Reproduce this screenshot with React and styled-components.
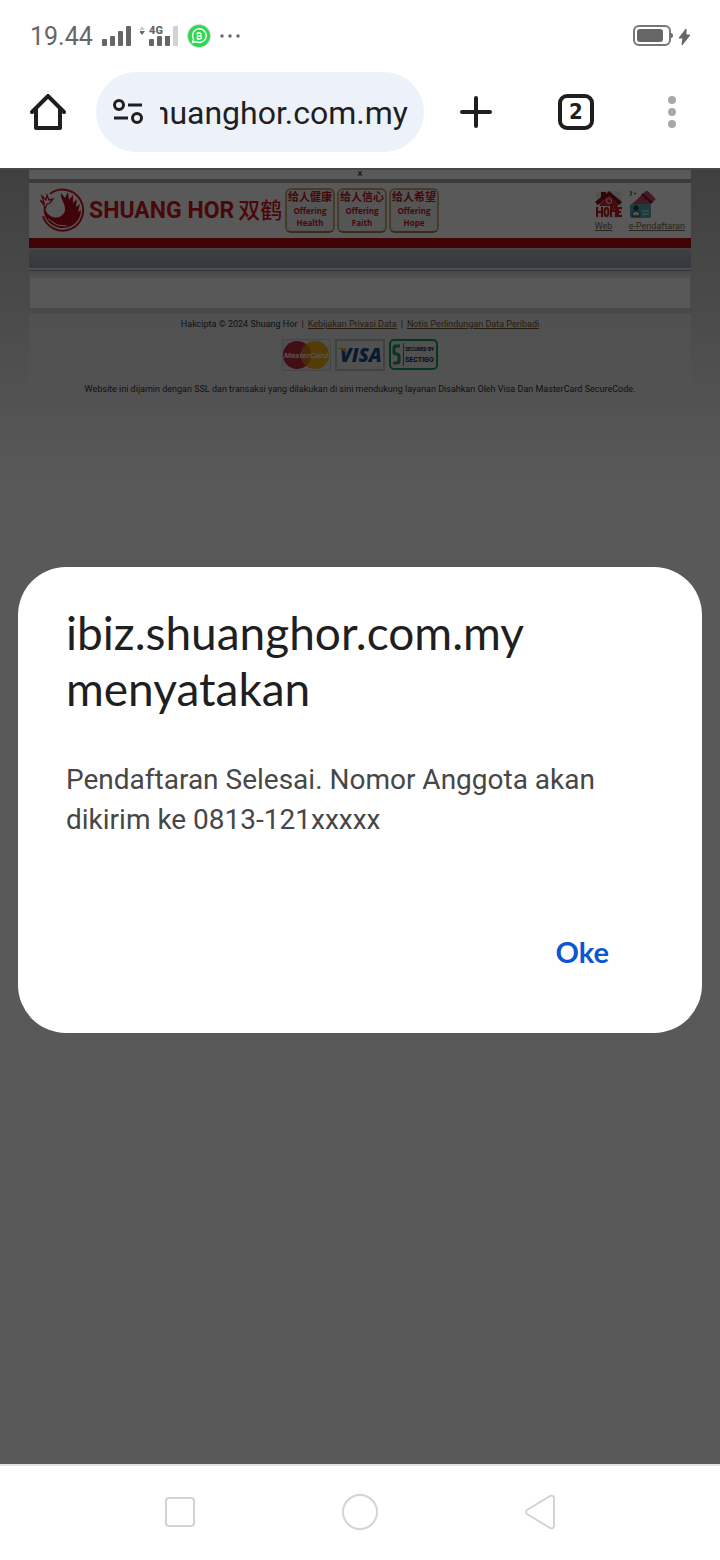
import React from 'react';
import styled, { createGlobalStyle } from 'styled-components';

const GlobalStyle = createGlobalStyle`
  *, *::before, *::after { box-sizing: border-box; }
  body { margin: 0; background: #fff; font-family: Roboto, "Noto Sans CJK SC", sans-serif; }
  button { border: 0; padding: 0; background: none; font: inherit; color: inherit; cursor: pointer; }
  svg { display: block; flex: none; }
`;

const Screen = styled.div`
  display: flex;
  flex-direction: column;
  min-height: 100vh;
`;

const StatusBar = styled.header`
  display: flex;
  align-items: center;
  gap: 9px;
  height: 72px;
  padding: 0 30px;
  color: #666;
`;

const Clock = styled.time`
  padding-top: 2px;
  font-size: 25px;
  line-height: 32px;
`;

const Battery = styled.div`
  margin-left: auto;
`;

const Toolbar = styled.nav`
  display: flex;
  padding-bottom: 16px;
  color: #1f1f1f;
`;

const ToolButton = styled.button`
  display: flex;
  flex: none;
  align-items: center;
  justify-content: center;
  width: ${(p) => (p.$wide ? 104 : 96)}px;
  height: 80px;
`;

const AddressBar = styled.div`
  display: flex;
  flex: 1;
  align-items: center;
  gap: 16px;
  min-width: 0;
  height: 80px;
  padding: 0 16px;
  border-radius: 40px;
  background: #ecf1fa;
`;

const AddressInput = styled.input`
  flex: 1;
  min-width: 0;
  height: 48px;
  padding: 2px 0 0;
  border: 0;
  outline: 0;
  background: none;
  color: #1f1f1f;
  direction: rtl;
  font-family: Roboto, sans-serif;
  font-size: 32px;
`;

const TabCount = styled.span`
  display: flex;
  align-items: center;
  justify-content: center;
  width: 36px;
  height: 36px;
  border: 4px solid #1f1f1f;
  border-radius: 9px;
  font-family: "DejaVu Sans Condensed", Roboto, sans-serif;
  font-size: 22px;
  font-weight: 700;
  line-height: 28px;
`;

const Viewport = styled.main`
  position: relative;
  display: flex;
  flex: 1;
  flex-direction: column;
`;

const Site = styled.div`
  flex: 1;
  padding: 0 29px;
  border-top: 2px solid #ccc;
  background: linear-gradient(#b6b6b6, #fff 320px);
`;

const TopStrip = styled.div`
  height: 13px;
  border-bottom: 4px solid #a8a8a8;
  background: #fff;
  text-align: center;
  font-size: 10px;
  line-height: 8px;
`;

const SiteHeader = styled.div`
  display: flex;
  align-items: flex-start;
  height: 55px;
  padding: 5px 6px 0 10px;
  background: #fff;
`;

const Brand = styled.div`
  display: flex;
  align-items: center;
  gap: 4px;
  width: 246px;
  height: 45px;
  color: #d3151d;
  white-space: nowrap;
`;

const BrandName = styled.span`
  font-family: Roboto, sans-serif;
  font-size: 23px;
  font-weight: 700;
  line-height: 32px;
`;

const BrandChinese = styled.span`
  padding-bottom: 6px;
  font-family: "Noto Sans CJK SC", sans-serif;
  font-size: 22px;
  font-weight: 500;
  line-height: 32px;
`;

const Badges = styled.div`
  display: flex;
  gap: 2px;
`;

const Badge = styled.div`
  width: 50px;
  height: 45px;
  border: 2px solid #c9a876;
  border-bottom-color: #a87f40;
  border-radius: 6px;
  background: #f4f4f4;
  color: #c3151d;
  text-align: center;
  font-family: "Open Sans", sans-serif;
  font-size: 8px;
  font-weight: 700;
  line-height: 12px;
  white-space: nowrap;
`;

const BadgeTitle = styled.div`
  height: 15px;
  font-family: "Noto Sans CJK SC", sans-serif;
  font-size: 11px;
  line-height: 12px;
`;

const Links = styled.div`
  display: flex;
  gap: 6px;
  margin-left: auto;
  padding-top: 2px;
`;

const SiteLink = styled.a`
  color: #77654e;
  font-size: 9px;
  line-height: 14px;
`;

const Bar = styled.div`
  height: 10px;
  background: #bb0d0f;
`;

const MenuBar = styled.div`
  height: 22px;
  border-top: 1px solid #c8c8c8;
  border-bottom: 2px solid #dde2e8;
  background: linear-gradient(#b3bbc0, #969fae);
`;

const Shade = styled.div`
  height: 8px;
  border-top: 1px solid #8b91a3;
  background: linear-gradient(#cfcfd6, #e4e4e4);
`;

const Panel = styled.div`
  height: 30px;
  border: solid #d8d8d8;
  border-width: 0 1px;
  background: #fdfdfd;
`;

const Divider = styled.div`
  height: 6px;
  background: linear-gradient(#cacaca, #d6d6d6);
`;

const Footer = styled.footer`
  display: flex;
  flex-direction: column;
  align-items: center;
  height: 80px;
  padding-top: 4px;
  background: linear-gradient(#e6e6e6, #ebebeb);
  color: #333;
  font-size: 9px;
  line-height: 12px;
  white-space: nowrap;
`;

const Logos = styled.div`
  display: flex;
  gap: 4px;
  margin: 9px 0 12px;
`;

const LegalLine = styled.div`
  display: flex;
  gap: 4px;
`;

const LegalLink = styled.a`
  color: #6d4f2c;
`;

const Scrim = styled.div`
  position: absolute;
  inset: 0;
  display: flex;
  align-items: center;
  padding: 0 18px 32px;
  background: rgba(0, 0, 0, 0.65);
`;

const Dialog = styled.section`
  display: flex;
  flex: 1;
  flex-direction: column;
  padding: 38px 48px 42px;
  border-radius: 48px;
  background: #fff;
`;

const DialogTitle = styled.h1`
  margin: 0 0 43px;
  color: #1f1f1f;
  font-family: Lato, sans-serif;
  font-size: 46px;
  font-weight: 400;
  line-height: 56px;
`;

const DialogText = styled.p`
  margin: 0 0 71px;
  color: #474747;
  font-size: 28px;
  line-height: 40px;
`;

const ConfirmButton = styled.button`
  align-self: flex-end;
  height: 80px;
  padding: 0 45px;
  color: #0b57d0;
  font-family: Lato, sans-serif;
  font-size: 29px;
  font-weight: 700;
`;

const SystemNav = styled.nav`
  display: flex;
  height: 96px;
  padding: 0 12.5% 2px;
  border-top: 2px solid #e2e2e2;
`;

const SystemButton = styled.button`
  display: flex;
  flex: 1;
  align-items: center;
  justify-content: center;
`;

const badges = [
  ['给人健康', 'Health'],
  ['给人信心', 'Faith'],
  ['给人希望', 'Hope'],
];

const SignalIcon = () => (
  <svg width="29" height="20" fill="#666">
    <rect x="0" y="13" width="5" height="7" rx="1" />
    <rect x="8" y="10" width="5" height="10" rx="1" />
    <rect x="16" y="5" width="5" height="15" rx="1" />
    <rect x="24" y="0" width="5" height="20" rx="1" />
  </svg>
);

const MobileDataIcon = () => (
  <svg width="38" height="22" fill="#666">
    <path d="M-1 5l3-4 3 4z" fill="#ccc" />
    <path d="M-1 6l3 4 3-4z" />
    <text x="9" y="9" fontFamily="Roboto, sans-serif" fontSize="11" fontWeight="900">4G</text>
    <rect x="9" y="14" width="5" height="7" rx="1" />
    <rect x="17" y="11" width="5" height="10" rx="1" />
    <path d="M25 11h5v9q0 1-1 1h-3q-1 0-1-1z" />
    <rect x="33" y="1" width="5" height="20" rx="1" fill="#d2d2d2" />
  </svg>
);

const WhatsAppIcon = () => (
  <svg width="24" height="24" viewBox="0 0 24 24">
    <circle cx="12" cy="12" r="12" fill="#dcdcdc" />
    <circle cx="12" cy="12" r="11" fill="#2bd951" />
    <path d="M5.5 18.5l1-3.5a6.8 6.8 0 1 1 2.7 2.6z" fill="none" stroke="#fff" strokeWidth="1.4" />
    <path d="M10.4 9h2.2a1.4 1.4 0 0 1 0 3h-2.2zm0 3h2.6a1.5 1.5 0 0 1 0 3h-2.6z" fill="none" stroke="#fff" strokeWidth="1.3" />
  </svg>
);

const MoreIcon = () => (
  <svg width="20" height="4" fill="#666">
    <circle cx="2" cy="2" r="1.7" /><circle cx="10" cy="2" r="1.7" /><circle cx="18" cy="2" r="1.7" />
  </svg>
);

const BatteryIcon = () => (
  <svg width="57" height="22" fill="#666">
    <rect x="1" y="1" width="36" height="19" rx="5" fill="none" stroke="#777" strokeWidth="2" />
    <rect x="4" y="4" width="26" height="13" rx="3" />
    <path d="M38 8q2 0 2 2.500t-2 2.500z" />
    <path d="M53 4l-7 9h4l-1 7 8-10h-4z" stroke="#666" strokeLinejoin="round" />
  </svg>
);

const HomeIcon = () => (
  <svg width="36" height="36" fill="none" stroke="#1f1f1f" strokeWidth="4" strokeLinecap="round" strokeLinejoin="round">
    <path d="M2 18L18 2l16 16" strokeLinejoin="miter" />
    <path d="M6 15v19h24V15" />
  </svg>
);

const TuneIcon = () => (
  <svg width="32" height="28" fill="none" stroke="#1f1f1f" strokeWidth="3">
    <circle cx="7" cy="7" r="4.500" /><path d="M16 7h14M2 20h14" /><circle cx="25" cy="20" r="4.500" />
  </svg>
);

const PhoenixLogo = () => (
  <svg width="46" height="45" viewBox="0 0 46 45">
    <path d="M11 6A20.500 20.500 0 1 1 4 28" fill="none" stroke="#d3151d" strokeWidth="2" />
    <path d="M5 17C3 30 12 40 24 40c10 0 18-8 18-18l-3 2 2-8-4 3 1-8-4 4v-8l-4 5-1-8-3 6-4-5c-1 6 4 9 4 16 0 6-6 10-12 8-5-1-8-6-9-12z" fill="#b60d15" />
    <path d="M1 12l4 3-2-7 4 4 1-5 2 5 4-1-3 4-3 1-2 5-1-4z" fill="none" stroke="#d3151d" strokeWidth="1.300" />
    <path d="M9 31l9 6 10 1" fill="none" stroke="#fff" strokeWidth="1" />
  </svg>
);

const HouseIcon = () => (
  <svg width="28" height="29" viewBox="0 0 28 29">
    <rect x="1" y="1" width="26" height="27" rx="3" fill="#ededed" />
    <path d="M0 12L6 7V2h5v2l3-3 13 11-3 3L14 6 3 15z" fill="#8d1116" />
    <path d="M5 14l9-8 9 8v2H5z" fill="#d8242c" />
    <circle cx="14" cy="11" r="2.500" fill="none" stroke="#eee" />
    <g fill="none" stroke="#c3151d" strokeWidth="2">
      <path d="M2 17v10M7 17v10M2 22h5M16 27V14l2.500 5 2.500-4v12M16 21h4M27 18h-4v8h4M23 22h3" />
      <ellipse cx="11.500" cy="22" rx="2" ry="4" />
    </g>
  </svg>
);

const CardsIcon = () => (
  <svg width="28" height="29" viewBox="0 0 28 29">
    <path d="M1 1l2 2M1 5l2-1M5 3l2 1" stroke="#597835" strokeWidth="1.500" />
    <path d="M3 14L17 1q1-1 3 1l6 6q1 1 0 2L15 20z" fill="#c64f60" />
    <path d="M12 5l10 9 2-2L14 3z" fill="#7c2638" />
    <rect x="1" y="14" width="21" height="14" rx="2" fill="#55a9b2" />
    <circle cx="7" cy="18" r="2.500" fill="#263a4d" />
    <path d="M3 26q0-5 4-5t4 5z" fill="#f0e6dd" stroke="#263a4d" />
    <path d="M13 21h7M13 24h7" stroke="#d8eff1" />
  </svg>
);

const MasterCardLogo = () => (
  <svg width="49" height="32">
    <rect x="0.500" y="0.500" width="48" height="31" rx="1" fill="#e6e6e6" stroke="#c9c9c9" />
    <circle cx="33" cy="16" r="14" fill="#edab12" />
    <circle cx="15" cy="16" r="14" fill="#bd283f" />
    <path d="M24 5a14 14 0 0 1 0 22 14 14 0 0 1 0-22" fill="#d77822" />
    <text x="2" y="19" fontFamily="Liberation Sans, sans-serif" fontSize="8" fontStyle="italic" fontWeight="700" fill="#eee">MasterCard</text>
  </svg>
);

const VisaLogo = () => (
  <svg width="50" height="32">
    <rect x="1" y="1" width="48" height="30" fill="#e8e8e8" stroke="#bcbcbc" strokeWidth="2" />
    <text x="5" y="23" fontFamily="Open Sans, sans-serif" fontSize="19" fontStyle="italic" fontWeight="800" fill="#164b91">VISA</text>
    <path d="M3 9h6q2 0 2 2l1 5q-3-5-9-7z" fill="#dba02b" />
  </svg>
);

const SectigoLogo = () => (
  <svg width="49" height="32">
    <rect x="1" y="1" width="47" height="29" rx="4" fill="#e8e8e8" stroke="#169957" strokeWidth="2" />
    <path d="M11 7H7q-2 0-2 2v4q0 2 2 2h1q2 0 2 2v5q0 2-2 2H4" fill="none" stroke="#169957" strokeWidth="3" />
    <path d="M14.500 4v23" stroke="#169957" />
    <g fontFamily="Roboto, sans-serif" fontWeight="700" fill="#222">
      <text x="16" y="12" fontSize="5">SECURED BY</text>
      <text x="16" y="23" fontSize="7">SECTIGO</text>
    </g>
  </svg>
);

export default function App() {
  return (
    <Screen>
      <GlobalStyle />
      <StatusBar>
        <Clock>19.44</Clock>
        <SignalIcon />
        <MobileDataIcon />
        <WhatsAppIcon />
        <MoreIcon />
        <Battery><BatteryIcon /></Battery>
      </StatusBar>

      <Toolbar>
        <ToolButton aria-label="Beranda"><HomeIcon /></ToolButton>
        <AddressBar>
          <TuneIcon />
          <AddressInput aria-label="Alamat" defaultValue="huanghor.com.my" />
        </AddressBar>
        <ToolButton $wide aria-label="Tab baru">
          <svg width="32" height="32" stroke="#1f1f1f" strokeWidth="4" strokeLinecap="round">
            <path d="M2 16h28M16 2v28" />
          </svg>
        </ToolButton>
        <ToolButton><TabCount>2</TabCount></ToolButton>
        <ToolButton aria-label="Menu">
          <svg width="8" height="32" fill="#a8a8a8">
            <circle cx="4" cy="4" r="4" /><circle cx="4" cy="16" r="4" /><circle cx="4" cy="28" r="4" />
          </svg>
        </ToolButton>
      </Toolbar>

      <Viewport>
        <Site>
          <TopStrip>×</TopStrip>
          <SiteHeader>
            <Brand>
              <PhoenixLogo />
              <BrandName>SHUANG HOR</BrandName>
              <BrandChinese>双鹤</BrandChinese>
            </Brand>
            <Badges>
              {badges.map(([title, word]) => (
                <Badge key={word}>
                  <BadgeTitle>{title}</BadgeTitle>
                  <div>Offering</div>
                  <div>{word}</div>
                </Badge>
              ))}
            </Badges>
            <Links>
              <SiteLink href="#web"><HouseIcon />Web</SiteLink>
              <SiteLink href="#daftar"><CardsIcon />e-Pendaftaran</SiteLink>
            </Links>
          </SiteHeader>
          <Bar />
          <MenuBar />
          <Shade />
          <Panel />
          <Divider />
          <Footer>
            <LegalLine>
              <span>Hakcipta © 2024 Shuang Hor</span>
              <span>|</span>
              <LegalLink href="#privasi">Kebijakan Privasi Data</LegalLink>
              <span>|</span>
              <LegalLink href="#notis">Notis Perlindungan Data Peribadi</LegalLink>
            </LegalLine>
            <Logos>
              <MasterCardLogo />
              <VisaLogo />
              <SectigoLogo />
            </Logos>
            <div>Website ini dijamin dengan SSL dan transaksi yang dilakukan di sini mendukung layanan Disahkan Oleh Visa Dan MasterCard SecureCode.</div>
          </Footer>
        </Site>
        <Scrim>
          <Dialog role="alertdialog" aria-labelledby="dialog-title">
            <DialogTitle id="dialog-title">ibiz.shuanghor.com.my menyatakan</DialogTitle>
            <DialogText>Pendaftaran Selesai. Nomor Anggota akan dikirim ke 0813-121xxxxx</DialogText>
            <ConfirmButton>Oke</ConfirmButton>
          </Dialog>
        </Scrim>
      </Viewport>

      <SystemNav>
        <SystemButton aria-label="Aplikasi terbaru">
          <svg width="30" height="30" fill="none" stroke="#d4d4d4" strokeWidth="2"><rect x="1" y="1" width="28" height="28" rx="3" /></svg>
        </SystemButton>
        <SystemButton aria-label="Layar utama">
          <svg width="36" height="36" fill="none" stroke="#d4d4d4" strokeWidth="2"><circle cx="18" cy="18" r="17" /></svg>
        </SystemButton>
        <SystemButton aria-label="Kembali">
          <svg width="30" height="36" fill="none" stroke="#d4d4d4" strokeWidth="2"><path d="M2 16L25 2q4-1 4 2v28q0 3-4 2L2 20q-2-2 0-4z" /></svg>
        </SystemButton>
      </SystemNav>
    </Screen>
  );
}
